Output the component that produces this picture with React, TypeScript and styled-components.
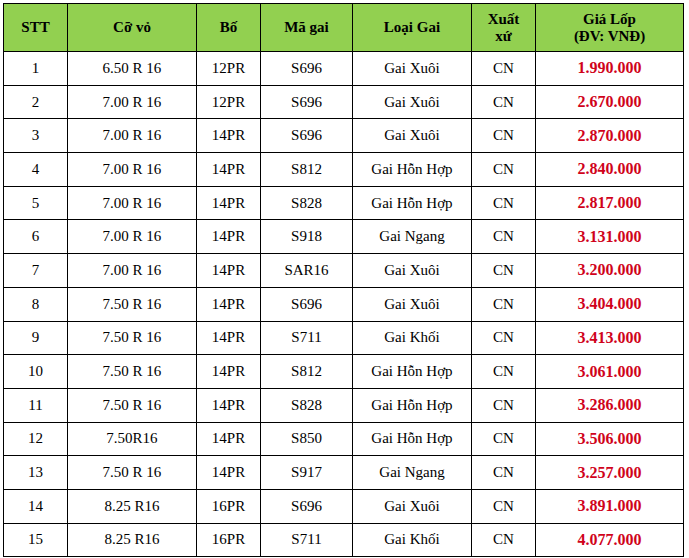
import styled, { createGlobalStyle } from "styled-components";

interface ITireRow {
  size: string;
  ply: string;
  code: string;
  tread: string;
  origin: string;
  price: string;
}

const rows: ITireRow[] = [
  { size: "6.50 R 16", ply: "12PR", code: "S696", tread: "Gai Xuôi", origin: "CN", price: "1.990.000" },
  { size: "7.00 R 16", ply: "12PR", code: "S696", tread: "Gai Xuôi", origin: "CN", price: "2.670.000" },
  { size: "7.00 R 16", ply: "14PR", code: "S696", tread: "Gai Xuôi", origin: "CN", price: "2.870.000" },
  { size: "7.00 R 16", ply: "14PR", code: "S812", tread: "Gai Hỗn Hợp", origin: "CN", price: "2.840.000" },
  { size: "7.00 R 16", ply: "14PR", code: "S828", tread: "Gai Hỗn Hợp", origin: "CN", price: "2.817.000" },
  { size: "7.00 R 16", ply: "14PR", code: "S918", tread: "Gai Ngang", origin: "CN", price: "3.131.000" },
  { size: "7.00 R 16", ply: "14PR", code: "SAR16", tread: "Gai Xuôi", origin: "CN", price: "3.200.000" },
  { size: "7.50 R 16", ply: "14PR", code: "S696", tread: "Gai Xuôi", origin: "CN", price: "3.404.000" },
  { size: "7.50 R 16", ply: "14PR", code: "S711", tread: "Gai Khối", origin: "CN", price: "3.413.000" },
  { size: "7.50 R 16", ply: "14PR", code: "S812", tread: "Gai Hỗn Hợp", origin: "CN", price: "3.061.000" },
  { size: "7.50 R 16", ply: "14PR", code: "S828", tread: "Gai Hỗn Hợp", origin: "CN", price: "3.286.000" },
  { size: "7.50R16", ply: "14PR", code: "S850", tread: "Gai Hỗn Hợp", origin: "CN", price: "3.506.000" },
  { size: "7.50 R 16", ply: "14PR", code: "S917", tread: "Gai Ngang", origin: "CN", price: "3.257.000" },
  { size: "8.25 R16", ply: "16PR", code: "S696", tread: "Gai Xuôi", origin: "CN", price: "3.891.000" },
  { size: "8.25 R16", ply: "16PR", code: "S711", tread: "Gai Khối", origin: "CN", price: "4.077.000" },
];

const colWidths = [64, 129, 64, 92, 119, 64, 148];

const serif = `"Liberation Serif", "DejaVu Serif", "Times New Roman", serif`;

const GlobalStyle = createGlobalStyle`
  html, body {
    margin: 0;
    padding: 0;
    background: #ffffff;
    font-family: ${serif};
  }
`;

const Page = styled.div`
  padding: 3px 0 0 3px;
  font-family: ${serif};
`;

const PriceTable = styled.table`
  border-collapse: collapse;
  table-layout: fixed;
  width: 681px;
  font-family: ${serif};
  font-size: 15px;
  color: #000;
`;

const HeadCell = styled.th`
  background-color: #92d050;
  border: 1.6px solid #000;
  height: 47px;
  padding: 0 6px;
  font-family: ${serif};
  font-weight: bold;
  font-size: 15px;
  line-height: 17px;
  text-align: center;
  vertical-align: middle;
`;

const Cell = styled.td<{ $price?: boolean }>`
  border: 1.6px solid #000;
  height: 32.7px;
  padding: 0 4px;
  text-align: center;
  vertical-align: middle;
  white-space: nowrap;
  font-family: ${serif};
  font-weight: ${(props) => (props.$price ? "bold" : "normal")};
  color: ${(props) => (props.$price ? "#d0021b" : "#000")};
  font-size: ${(props) => (props.$price ? "16px" : "15px")};
`;

const App = () => {
  return (
    <Page>
      <GlobalStyle />
      <PriceTable>
        <colgroup>
          {colWidths.map((w, i) => (
            <col key={i} style={{ width: w }} />
          ))}
        </colgroup>
        <thead>
          <tr>
            <HeadCell>STT</HeadCell>
            <HeadCell>Cỡ vỏ</HeadCell>
            <HeadCell>Bố</HeadCell>
            <HeadCell>Mã gai</HeadCell>
            <HeadCell>Loại Gai</HeadCell>
            <HeadCell>
              Xuất
              <br />
              xứ
            </HeadCell>
            <HeadCell>
              Giá Lốp
              <br />
              (ĐV: VNĐ)
            </HeadCell>
          </tr>
        </thead>
        <tbody>
          {rows.map((row, i) => (
            <tr key={i}>
              <Cell>{i + 1}</Cell>
              <Cell>{row.size}</Cell>
              <Cell>{row.ply}</Cell>
              <Cell>{row.code}</Cell>
              <Cell>{row.tread}</Cell>
              <Cell>{row.origin}</Cell>
              <Cell $price>{row.price}</Cell>
            </tr>
          ))}
        </tbody>
      </PriceTable>
    </Page>
  );
};

export default App;
